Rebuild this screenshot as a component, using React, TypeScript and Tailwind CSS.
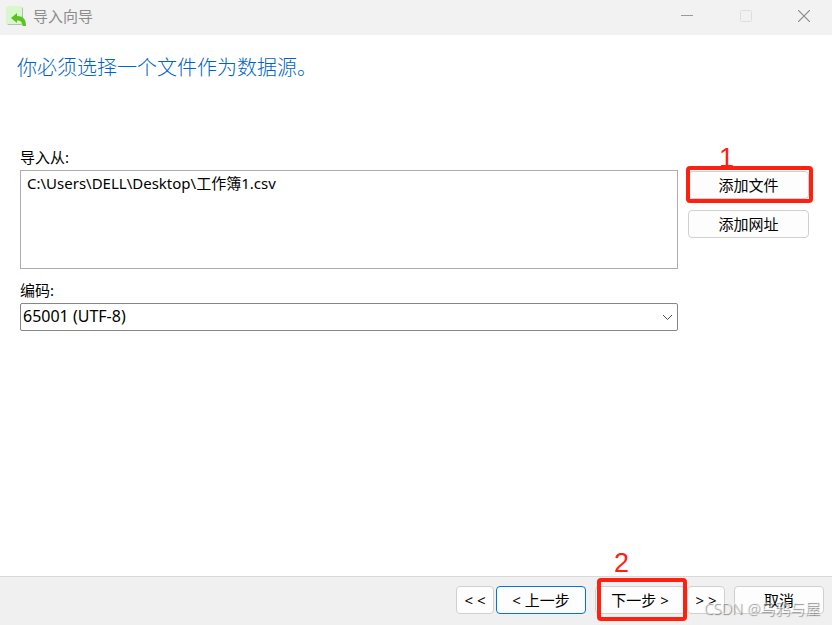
import { useState } from 'react';
import type { ReactNode } from 'react';

const Callout = ({ className, label, labelClassName }: { className: string; label: string; labelClassName: string }) => (
  <div className={`pointer-events-none absolute z-10 rounded-sm border-4 border-[#ff2010] ${className}`}>
    <span className={`absolute font-['Liberation_Sans',sans-serif] text-[27px] leading-6 text-[#ff2010] ${labelClassName}`}>
      {label}
    </span>
  </div>
);

const WizardButton = ({ children, className = '' }: { children: ReactNode; className?: string }) => (
  <button
    type="button"
    className={`flex h-7 items-center justify-center whitespace-pre rounded border bg-[#fdfdfd] leading-5 ${className}`}
  >
    {children}
  </button>
);

const TitleBar = () => (
  <header className="flex h-[35px] items-start justify-between bg-[#f2f2f2] text-[#8c8c8c]">
    <div className="flex items-start gap-[6px] pl-[6px] pt-[6px]">
      <svg width="21" height="21" viewBox="0 0 21 21" aria-hidden="true">
        <rect x="1" y="1" width="16" height="18" rx="2" fill="#b9b9b9" />
        <rect x="0" y="0" width="16" height="18" rx="2" fill="#d8f8cc" />
        <path d="M5 12 L11 7 V10 C17 10 20 13 20 20 H16.500 C16.500 16 15 14.500 11 14.500 V17 Z" fill="#5bc325" />
      </svg>
      <h1 className="leading-5">导入向导</h1>
    </div>
    <div className="flex">
      <button type="button" aria-label="最小化" className="flex h-8 w-[59px] items-center justify-center">
        <svg width="12" height="12" viewBox="0 0 12 12" fill="none" stroke="#999999">
          <path d="M0 5.500H12" />
        </svg>
      </button>
      <button type="button" aria-label="最大化" disabled className="flex h-8 w-[59px] items-center justify-center">
        <svg width="12" height="12" viewBox="0 0 12 12" fill="none" stroke="#dedede">
          <rect x="0.500" y="0.500" width="11" height="11" rx="1" />
        </svg>
      </button>
      <button type="button" aria-label="关闭" className="flex h-8 w-[57px] items-center justify-center">
        <svg width="12" height="12" viewBox="0 0 12 12" fill="none" stroke="#8a8a8a" strokeWidth="1.200">
          <path d="M0 0L12 12M12 0L0 12" />
        </svg>
      </button>
    </div>
  </header>
);

export default function App() {
  const [encoding, setEncoding] = useState('65001');

  return (
    <div className="flex min-h-screen flex-col bg-white font-['Noto_Sans','Noto_Sans_CJK_SC',sans-serif] text-[15px] text-black">
      <TitleBar />

      <main className="flex-1 pl-5 pr-[23px] pt-[18px]">
        <h2 className="-ml-[3px] font-['Noto_Sans_CJK_SC',sans-serif] text-xl font-light leading-7 text-[#0063c6]">
          你必须选择一个文件作为数据源。
        </h2>

        {/* Source files */}
        <label htmlFor="files" className="mt-[66px] block leading-5">
          导入从:
        </label>
        <div className="mt-[3px] flex gap-[10px]">
          <select
            id="files"
            size={4}
            className="h-[99px] min-w-0 flex-1 appearance-none overflow-hidden border border-[#acacac] bg-white outline-none"
          >
            <option className="px-[6px] py-px leading-5">C:\Users\DELL\Desktop\工作簿1.csv</option>
          </select>
          <div className="flex w-[121px] flex-col gap-[11px] pt-px">
            <div className="relative">
              <WizardButton className="w-full border-[#d0d0d0]">添加文件</WizardButton>
              <Callout className="-bottom-1 -left-[2px] -right-1 -top-[5px]" label="1" labelClassName="left-[29px] -top-[24px]" />
            </div>
            <WizardButton className="w-full border-[#d0d0d0]">添加网址</WizardButton>
          </div>
        </div>

        {/* Encoding */}
        <div className="mr-[131px]">
          <label htmlFor="encoding" className="mt-[11px] block leading-5">
            编码:
          </label>
          <div className="relative mt-[3px]">
            <select
              id="encoding"
              value={encoding}
              onChange={(e) => setEncoding(e.target.value)}
              className="h-7 w-full appearance-none rounded-xs border border-[#868686] bg-white pb-[2px] pl-[2px] pr-6 text-base leading-5"
            >
              <option value="65001">65001 (UTF-8)</option>
              <option value="936">936 (GBK)</option>
            </select>
            <svg
              className="pointer-events-none absolute right-[5px] top-[11px]"
              width="11"
              height="7"
              viewBox="0 0 11 7"
              fill="none"
              stroke="#505050"
            >
              <path d="M1 1L5.500 5.500L10 1" />
            </svg>
          </div>
        </div>
      </main>

      <footer className="relative flex h-[49px] justify-end border-t border-[#d9d9d9] bg-[#f0f0f0] pr-2 pt-[9px]">
        <div className="flex items-start gap-[9px]">
          <div className="flex gap-[2px]">
            <WizardButton className="w-[38px] border-[#d0d0d0]">{'< <'}</WizardButton>
            <WizardButton className="w-[90px] border-[#0078d4]">{'< 上一步'}</WizardButton>
          </div>
          <div className="flex gap-[2px]">
            <div className="relative">
              <WizardButton className="w-[90px] border-[#d0d0d0]">{'下一步 >'}</WizardButton>
              <Callout className="-bottom-[7px] -right-[2px] -top-2 left-[2px]" label="2" labelClassName="left-[13px] -top-[31px]" />
            </div>
            <WizardButton className="w-[38px] border-[#d0d0d0]">{'> >'}</WizardButton>
          </div>
          <WizardButton className="w-[90px] border-[#d0d0d0]">取消</WizardButton>
        </div>
        <span className="pointer-events-none absolute bottom-[7px] right-3 font-light leading-5 text-white/60 [text-shadow:1px_1px_1px_#777777]">
          CSDN @乌鸦与屋
        </span>
      </footer>
    </div>
  );
}
